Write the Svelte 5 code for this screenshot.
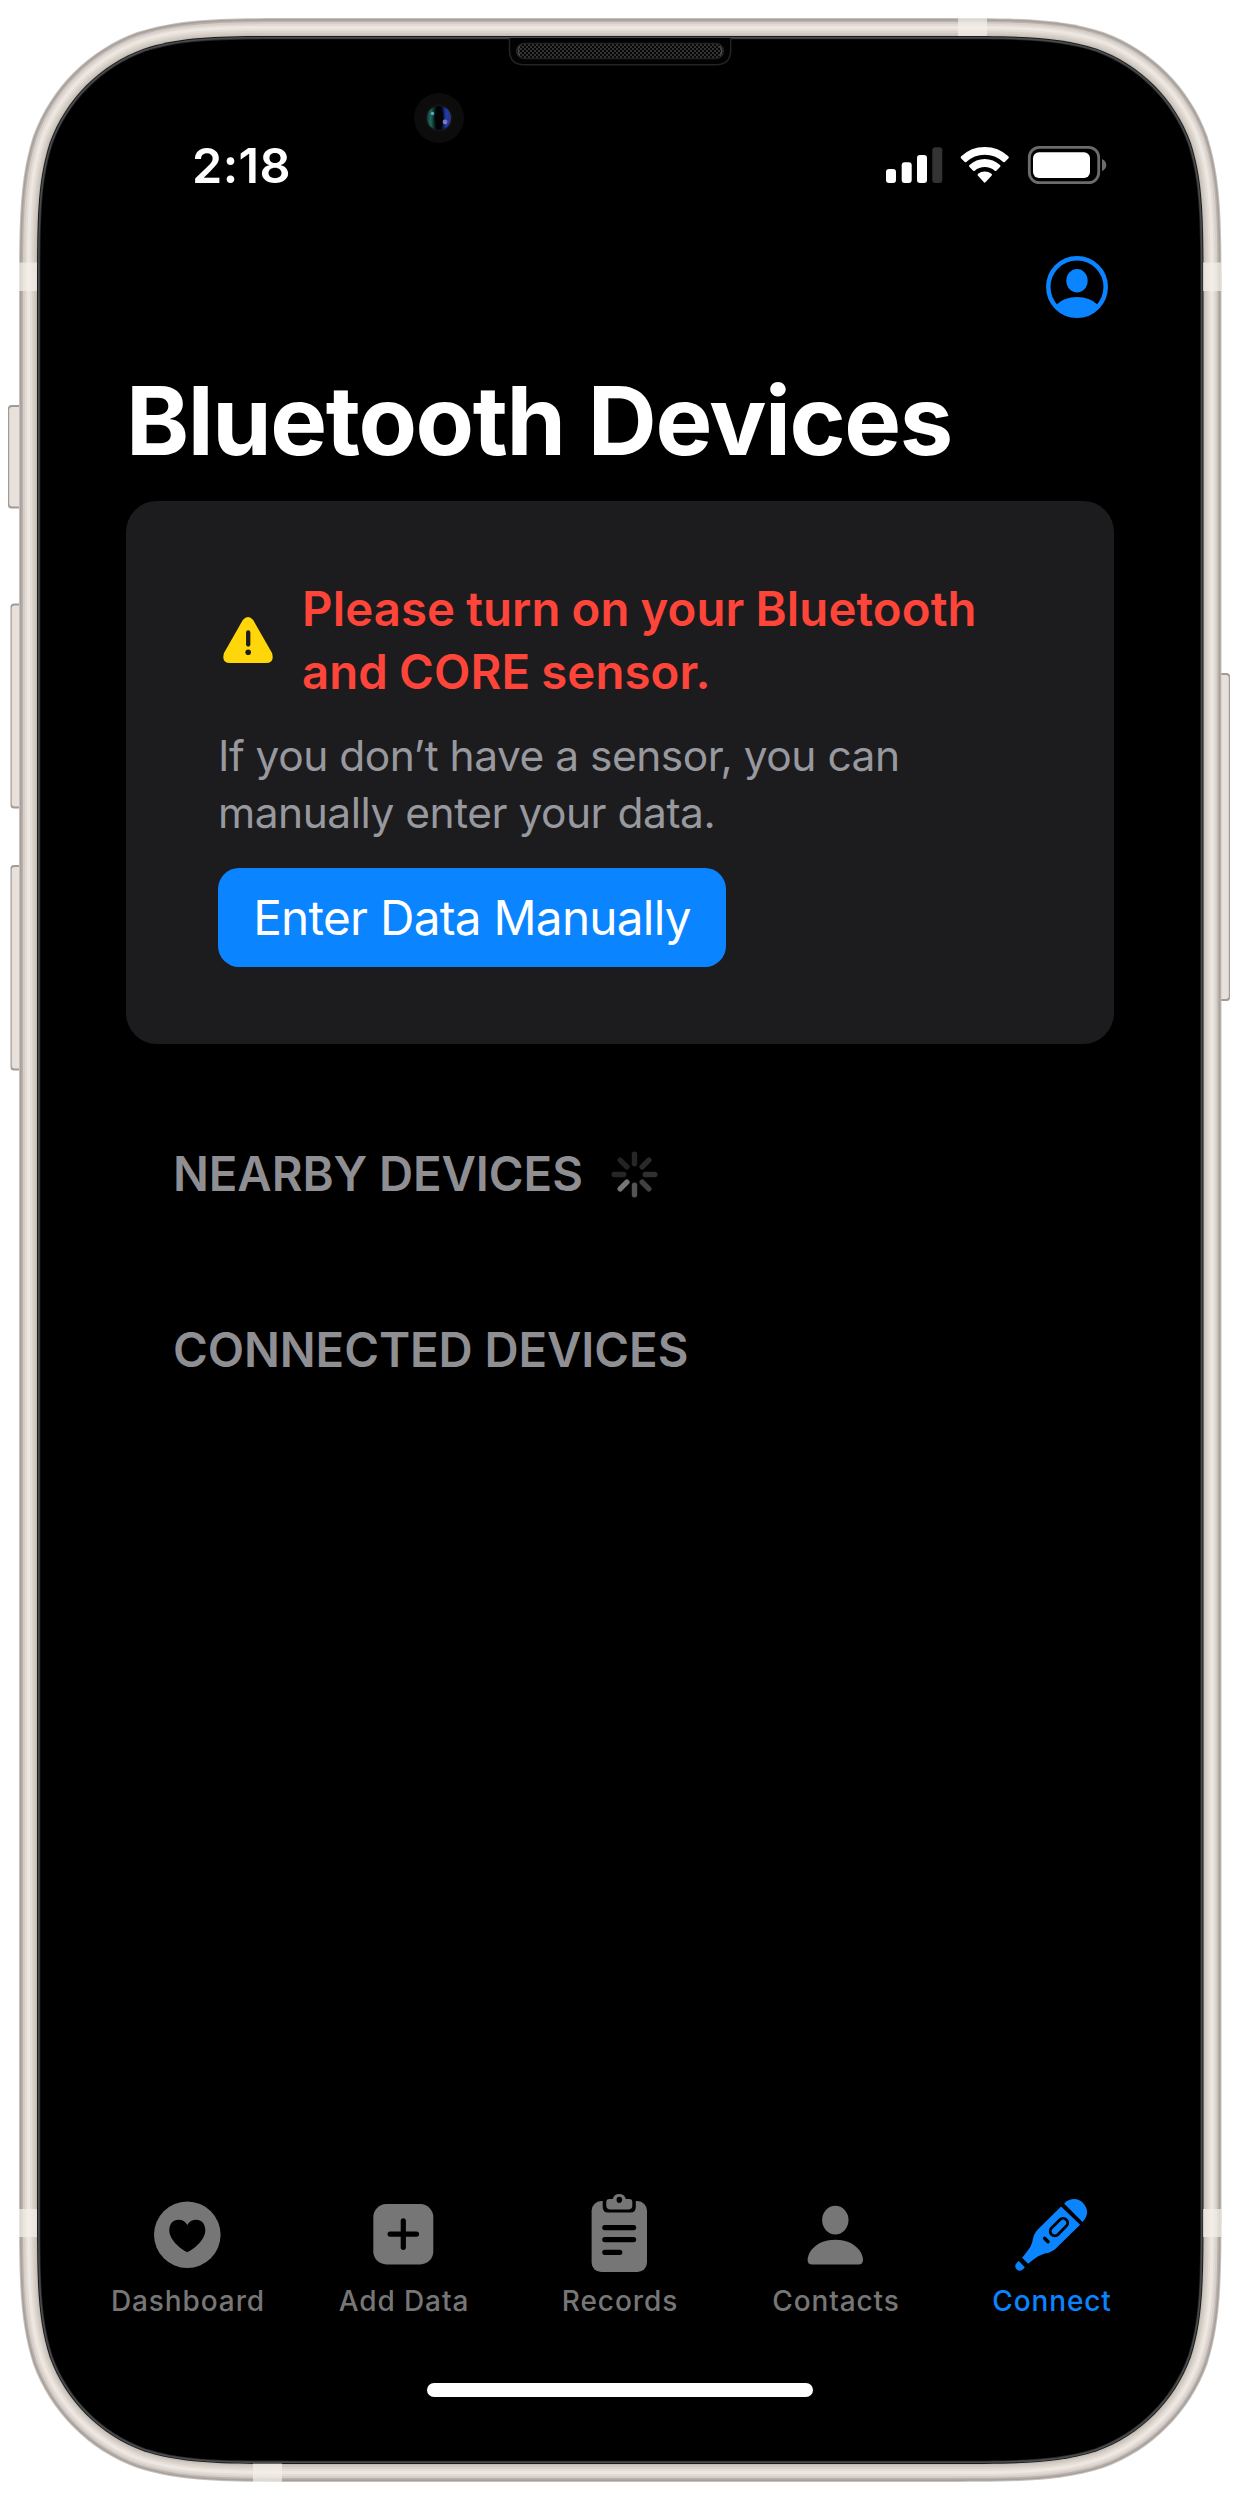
<script>
  // Rounded rectangle with continuous-curvature corners.
  function squircle(x, y, w, h, r) {
    const a = 1.52866 * r, b = 1.08849 * r, c = 0.86841 * r, d = 0.63149 * r;
    const e = 0.07491 * r, f = 0.37282 * r, g = 0.16906 * r;
    const X = x + w, Y = y + h;
    return [
      `M${x + a} ${y}L${X - a} ${y}`,
      `C${X - b} ${y} ${X - c} ${y} ${X - d} ${y + e}`,
      `C${X - f} ${y + g} ${X - g} ${y + f} ${X - e} ${y + d}`,
      `C${X} ${y + c} ${X} ${y + b} ${X} ${y + a}`,
      `L${X} ${Y - a}`,
      `C${X} ${Y - b} ${X} ${Y - c} ${X - e} ${Y - d}`,
      `C${X - g} ${Y - f} ${X - f} ${Y - g} ${X - d} ${Y - e}`,
      `C${X - c} ${Y} ${X - b} ${Y} ${X - a} ${Y}`,
      `L${x + a} ${Y}`,
      `C${x + b} ${Y} ${x + c} ${Y} ${x + d} ${Y - e}`,
      `C${x + f} ${Y - g} ${x + g} ${Y - f} ${x + e} ${Y - d}`,
      `C${x} ${Y - c} ${x} ${Y - b} ${x} ${Y - a}`,
      `L${x} ${y + a}`,
      `C${x} ${y + b} ${x} ${y + c} ${x + e} ${y + d}`,
      `C${x + g} ${y + f} ${x + f} ${y + g} ${x + d} ${y + e}`,
      `C${x + c} ${y} ${x + b} ${y} ${x + a} ${y}Z`
    ].join('');
  }

  // Metal rim, from the outer edge inwards: [inset, colour]
  const rim = [
    [0, '#c6c1bd'], [1, '#a79f99'], [2.5, '#b9b1ab'], [4, '#d5cec8'], [6, '#e2dad4'],
    [8, '#eee7e1'], [11, '#e5ded7'], [13, '#dad3cc'], [15, '#cfc8c1'], [17, '#c2bbb5'],
    [18, '#1b1b1b'], [19, '#4b4c4e'], [20.5, '#2b2b2c'], [21.3, '#000']
  ].map(([i, fill]) => ({ fill, d: squircle(19 + i, 18 + i, 1202.5 - 2 * i, 2464 - 2 * i, 187 - i) }));

  const sideButtons = [
    { x: 8, y: 405, w: 16, h: 103.5 },
    { x: 10.5, y: 603.5, w: 14, h: 205 },
    { x: 10.5, y: 865, w: 14, h: 205.5 },
    { x: 1215, y: 673, w: 15, h: 328 }
  ];
  const antennas = [
    { x: 19, y: 262.5, w: 18, h: 28.5 }, { x: 19, y: 2209, w: 18, h: 28 },
    { x: 1203, y: 262.5, w: 18.5, h: 28.5 }, { x: 1203, y: 2209, w: 18.5, h: 28 },
    { x: 958, y: 18, w: 29, h: 18 }, { x: 253, y: 2463.5, w: 29, h: 18.5 }
  ];

  const spokes = ['#272727', '#2a2a2b', '#303031', '#414142', '#545456', '#767678', '#262627', '#232324'];

  const tabs = [
    { label: 'Dashboard', icon: 'heart' },
    { label: 'Add Data', icon: 'plus' },
    { label: 'Records', icon: 'clipboard' },
    { label: 'Contacts', icon: 'person' },
    { label: 'Connect', icon: 'thermometer', active: true }
  ];
</script>

<div class="phone">
  <svg class="device" viewBox="0 0 1240 2500" aria-hidden="true">
    <defs>
      <linearGradient id="lens">
        <stop offset="0" stop-color="#26302f" />
        <stop offset=".15" stop-color="#1c6a60" />
        <stop offset=".38" stop-color="#020606" />
        <stop offset=".58" stop-color="#01020c" />
        <stop offset=".8" stop-color="#1d3fae" />
        <stop offset="1" stop-color="#33307a" />
      </linearGradient>
      <pattern id="mesh" width="4" height="4" patternUnits="userSpaceOnUse">
        <rect width="4" height="4" fill="#060606" />
        <rect width="2" height="2" fill="#333" />
        <rect x="2" y="2" width="2" height="2" fill="#333" />
      </pattern>
    </defs>
    {#each sideButtons as b}
      <rect x={b.x} y={b.y} width={b.w} height={b.h} rx="3.5" fill="#a29a94" />
      <rect x={b.x + 1.2} y={b.y + 2} width={b.w - 2.4} height={b.h - 4} rx="3" fill="#e8e1db" />
    {/each}
    {#each rim as layer}
      <path d={layer.d} fill={layer.fill} />
    {/each}
    {#each antennas as a}
      <rect x={a.x} y={a.y} width={a.w} height={a.h} fill="#f3f0ea" opacity=".7" />
    {/each}
    <path d="M509.5 38V50Q509.5 64.7 524 64.7H716Q730.7 64.7 730.7 50V38" fill="#020202" stroke="#232323" stroke-width="1.5" />
    <rect x="516.5" y="43.5" width="207" height="15" rx="7.5" fill="url(#mesh)" stroke="#222" stroke-width="1.5" />
    <path d="M520 46Q516.8 51 520 56M720 46Q723.2 51 720 56" fill="none" stroke="#4a4a4a" stroke-width="1.3" />
    <circle cx="439" cy="118" r="25" fill="#0c0c0c" />
    <circle cx="439" cy="118" r="13.5" fill="#151515" />
    <circle cx="439" cy="118" r="12" fill="url(#lens)" />
    <ellipse cx="439" cy="118" rx="4.5" ry="11" fill="#010204" />
    <circle cx="432.5" cy="113.5" r="1.7" fill="#5aa8c4" />
    <circle cx="445" cy="122" r="2.4" fill="#8474b4" />
  </svg>

  <main class="screen">
    <div class="status">
      <span class="time">2:18</span>
      <svg class="indicators" viewBox="884 140 224 50" aria-hidden="true">
        <g fill="#fff">
          <rect x="886" y="169" width="10" height="14" rx="3" />
          <rect x="901.7" y="162.3" width="10" height="20.7" rx="3" />
          <rect x="917" y="155" width="10" height="28" rx="3" />
          <rect x="932.3" y="147.3" width="10" height="35.7" rx="3" fill="#333" />
          <path d="M961.2 158.5q-1.2-1.2 0-2.2Q971 147 984.7 147T1008.3 156.3q1.2 1 0 2.2L1004.7 162q-.7.7-1.5 0Q995.3 154.7 984.7 154.7T966.3 162q-.8.7-1.5 0Z" />
          <path d="M969.5 167q-1.1-1 0-2Q976 159 984.7 159T1000 165q1.1 1 0 2L996.3 170.7q-.8.7-1.6 0Q990.5 167 984.7 167T974.8 170.7q-.8.7-1.6 0Z" />
          <path d="M978 175.7q-1.1-1 .1-1.9Q981 171.5 984.7 171.5T991.5 173.8q1.1.9 0 1.9L985.5 182.3q-.8.8-1.6 0Z" />
          <rect x="1033" y="152.2" width="57" height="25.8" rx="6" />
        </g>
        <rect x="1029.3" y="147.4" width="69.4" height="35.2" rx="10" fill="none" stroke="#6c6c6c" stroke-width="2.8" />
        <path d="M1102 159Q1106.3 161 1106.3 165T1102 171Z" fill="#6c6c6c" />
      </svg>
    </div>

    <header class="nav">
      <svg class="profile" viewBox="0 0 62 62" aria-hidden="true">
        <circle cx="31" cy="31" r="28.7" fill="none" stroke="#0a84ff" stroke-width="4.5" />
        <ellipse cx="31" cy="24.7" rx="10.7" ry="11.7" fill="#0a84ff" />
        <path d="M10.3 48.8Q18 41 31 41T51.7 48.8Q43 60.5 31 60.5T10.3 48.8Z" fill="#0a84ff" />
      </svg>
    </header>

    <h1>Bluetooth Devices</h1>

    <section class="card">
      <div class="alert">
        <svg class="warning" viewBox="0 0 50 46" aria-hidden="true">
          <path d="M19.8 3Q25-3 30.2 3L49 36Q51.8 45.7 43 46H7Q-1.8 45.7 1 36Z" fill="#ffd60a" />
          <path d="M25.2 15.3V27.5" stroke="#1c1c1e" stroke-width="4.3" stroke-linecap="round" />
          <circle cx="25.2" cy="35.2" r="2.8" fill="#1c1c1e" />
        </svg>
        <p class="message">Please turn on your Bluetooth<br />and CORE sensor.</p>
      </div>
      <p class="hint">If you don’t have a sensor, you can<br />manually enter your data.</p>
      <button type="button">Enter Data Manually</button>
    </section>

    <h2 class="nearby">
      NEARBY DEVICES
      <svg class="spinner" viewBox="-23.5 -23.5 47 47" aria-hidden="true">
        {#each spokes as color, i}
          <path d="M0-20.3V-10.8" stroke={color} stroke-width="5.4" stroke-linecap="round" transform="rotate({i * 45})" />
        {/each}
      </svg>
    </h2>
    <h2 class="connected">CONNECTED DEVICES</h2>

    <nav class="tabs">
      {#each tabs as tab}
        <div class="tab" class:active={tab.active}>
          <svg viewBox="0.7 0.9 100 93" aria-hidden="true">
            {#if tab.icon === 'heart'}
              <circle cx="50" cy="44.7" r="33.3" />
              <path class="cut" d="M50 62.2C44 59.5 32 50 32 40.5C32 33.5 36 29.7 41 29.7C45 29.7 48.3 31.5 50 35C51.7 31.5 55 29.7 59 29.7C64 29.7 68 33.5 68 40.5C68 50 56 59.5 50 62.2Z" />
            {:else if tab.icon === 'plus'}
              <rect x="20" y="14" width="60" height="60.3" rx="13" />
              <path class="slot" d="M36.8 44H63.2M50 30.8V57.2" />
            {:else if tab.icon === 'clipboard'}
              <rect x="22.3" y="11" width="55.4" height="71" rx="9.5" />
              <path class="cut" d="M33.4 9H66.5V17Q66.5 22.5 61 22.5H39Q33.4 22.5 33.4 17Z" />
              <path d="M40 9H43.4A6.8 6.8 0 0 1 56.6 9H60Q63 9 63 12V15.5Q63 19.3 59.5 19.3H40.5Q37 19.3 37 15.5V12Q37 9 40 9Z" />
              <ellipse class="cut" cx="50" cy="9.7" rx="2.8" ry="3.1" />
              <path class="slot" d="M35.5 37.5H64.3M35.5 49.5H64.3M35.5 62.2H50.5" />
            {:else if tab.icon === 'person'}
              <ellipse cx="50" cy="30" rx="13.2" ry="14.3" />
              <path d="M27 74.5Q22.3 74.5 22.3 70C22.3 62 31 49.7 50 49.7S77.7 62 77.7 70Q77.7 74.5 73 74.5Z" />
            {:else}
              <path d="M62.8 13.3C70 7 77 8.2 81.7 13C87 18.5 87.5 25.5 81.2 32Z" />
              <path d="M59.8 16.3L78.8 34.7L55 58C50 63 46 62.5 41 64.5C35 66.5 31 70.5 26.8 73.7L20.8 67.7C25 62.5 29 58 30.5 53.5C32 48.5 31.5 44.5 37 39Z" />
              <path d="M17.5 71L23.5 77.2C21 80.8 18 81.5 15.5 79.3C13 77 13.5 74 17.5 71Z" />
              <path d="M53.5 41.2L61.8 32.8" stroke="#000" stroke-width="12" stroke-linecap="round" />
              <path d="M53.5 41.2L61.8 32.8" stroke="#0a84ff" stroke-width="6.2" stroke-linecap="round" />
              <path d="M43.3 48.2L46.7 51.6" stroke="#000" stroke-width="3.5" stroke-linecap="round" />
            {/if}
          </svg>
          <span>{tab.label}</span>
        </div>
      {/each}
    </nav>
    <div class="home"></div>
  </main>
</div>

<style>
  :global(body) { background: #fff; }
  .phone {
    position: relative;
    box-sizing: border-box;
    width: 1240px;
    height: 2500px;
    padding: 40px;
    overflow: hidden;
    font-family: Inter, 'Liberation Sans', sans-serif;
  }
  .device { position: absolute; inset: 0; width: 1240px; height: 2500px; }
  .screen {
    position: relative;
    display: flex;
    flex-direction: column;
    box-sizing: border-box;
    width: 1160px;
    height: 2420px;
    padding: 95px 86px 63px;
  }
  h1, h2, p { margin: 0; white-space: nowrap; }
  .status { display: flex; justify-content: space-between; align-items: center; height: 60px; padding: 0 6px 0 66px; }
  .time { padding-top: 2px; color: #fff; font-size: 48.5px; font-weight: 600; letter-spacing: .44px; line-height: 60px; }
  .indicators { width: 224px; height: 50px; }
  .nav { display: flex; justify-content: flex-end; height: 62px; margin-top: 61px; padding-right: 6px; }
  .profile { width: 62px; height: 62px; }
  h1 { margin-top: 47px; color: #fff; font-size: 95.5px; font-weight: 700; letter-spacing: -1.4px; word-spacing: 2px; line-height: 110px; }
  .card { box-sizing: border-box; height: 543px; margin-top: 26px; padding: 76px 92px 0; border-radius: 31px; background: #1c1c1e; }
  .alert { display: flex; align-items: center; }
  .warning { flex: none; width: 50px; height: 46px; margin: 0 29px 0 5px; }
  .message { color: #ff453a; font-size: 47.3px; font-weight: 600; letter-spacing: .12px; word-spacing: -1px; line-height: 63.3px; }
  .hint { margin-top: 23px; color: #98989f; font-size: 42.5px; letter-spacing: -.5px; line-height: 57.3px; }
  button {
    display: block;
    width: 508px;
    height: 99px;
    margin-top: 27px;
    padding: 0;
    border: 0;
    border-radius: 21px;
    background: #0a84ff;
    color: #fff;
    font: 400 47.7px/100px Inter, 'Liberation Sans', sans-serif;
    letter-spacing: -.73px;
  }
  h2 { padding-left: 47px; color: #8e8e93; font-size: 47.3px; font-weight: 600; letter-spacing: -.1px; line-height: 60px; }
  .nearby { display: flex; align-items: center; gap: 28px; margin-top: 100px; }
  .spinner { width: 47px; height: 47px; }
  .connected { margin-top: 116px; }
  .tabs { display: flex; margin: auto -46px 0; }
  .tab { display: flex; flex: 1; flex-direction: column; align-items: center; fill: #767676; color: #767676; }
  .tab svg { width: 100px; height: 93px; overflow: visible; }
  .tab span { font-size: 28px; font-weight: 500; letter-spacing: .9px; line-height: 34px; }
  .tab.active { fill: #0a84ff; color: #0a84ff; }
  .cut { fill: #000; }
  .slot { fill: none; stroke: #000; stroke-width: 5.2; stroke-linecap: round; }
  .home { align-self: center; width: 386px; height: 14px; margin-top: 65px; border-radius: 7px; background: #fff; }
</style>
